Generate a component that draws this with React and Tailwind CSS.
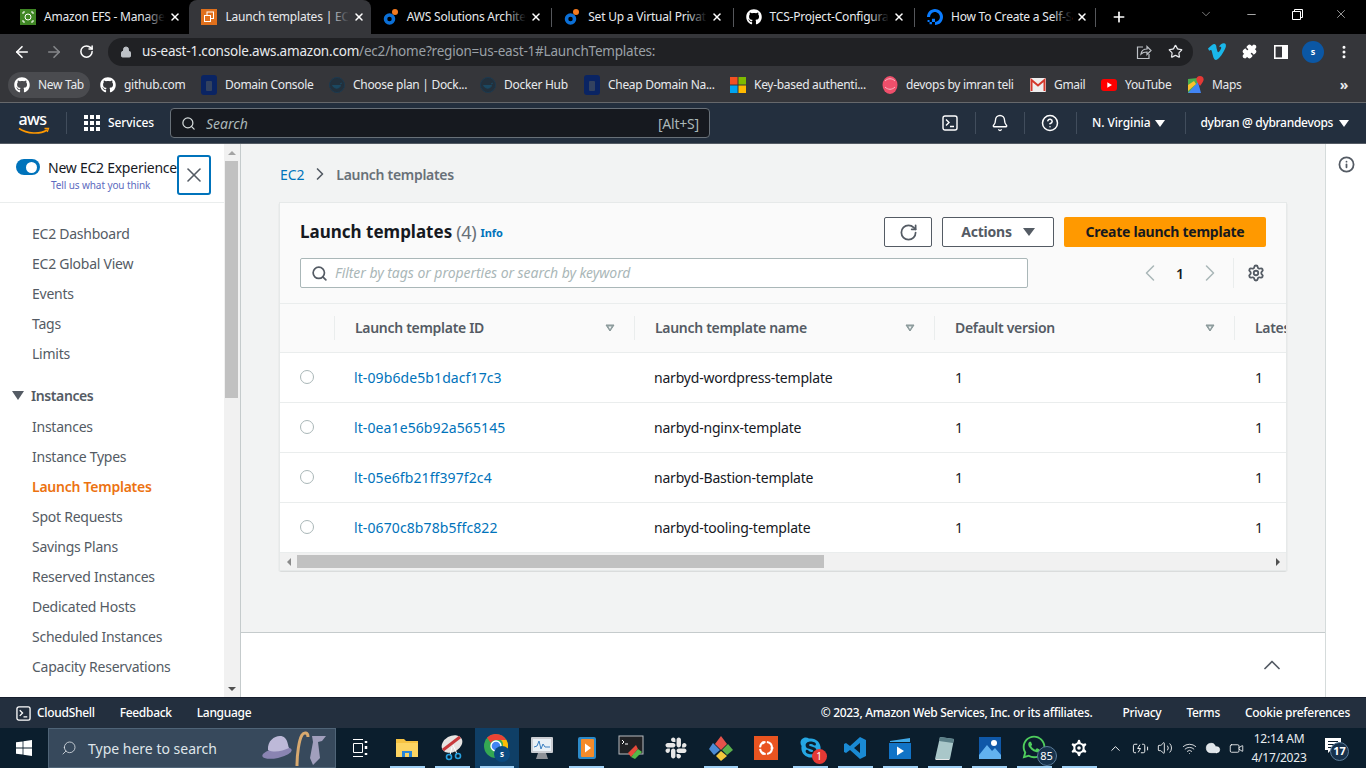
import React from "react";
import {
  ArrowLeft, ArrowRight, RotateCw, Lock, Star, Puzzle, X, Plus, Search, Bell,
  CircleHelp, ChevronLeft, ChevronRight, ChevronUp, ChevronDown, Settings, Info, Minus, MoreVertical,
  Volume2, Wifi, Cloud, BatteryCharging, Video,
} from "lucide-react";
import { FaGithub, FaWhatsapp, FaSkype, FaSlack } from "react-icons/fa";
import { SiDigitalocean } from "react-icons/si";

const UI = "font-['Noto_Sans',sans-serif]";

/* ---------- favicons ---------- */
const EfsIcon = () => (
  <svg width="16" height="16" viewBox="0 0 16 16">
    <rect width="16" height="16" fill="#3f8624" />
    <circle cx="8" cy="8" r="3" fill="none" stroke="#fff" />
    <path d="M3 3h2M3 3v2M13 3h-2M13 3v2M3 13h2M3 13v-2M13 13h-2M13 13v-2" stroke="#fff" />
  </svg>
);
const Ec2Icon = () => (
  <svg width="16" height="16" viewBox="0 0 16 16">
    <rect width="16" height="16" fill="#e0701c" />
    <rect x="6" y="3" width="6.5" height="6.5" fill="none" stroke="#fff" />
    <rect x="3.5" y="6.5" width="6" height="6" fill="#e0701c" stroke="#fff" />
  </svg>
);
const BlueIcon = () => (
  <svg width="16" height="16" viewBox="0 0 16 16">
    <circle cx="6.5" cy="10" r="4" fill="none" stroke="#0b6fd6" strokeWidth="3.5" />
    <circle cx="12" cy="3" r="3" fill="#f47b20" />
  </svg>
);
const NavyIcon = () => (
  <svg width="16" height="20" viewBox="0 0 16 20">
    <rect width="16" height="20" rx="3" fill="#0a2463" />
    <rect x="5" y="6" width="6" height="10" rx="1" fill="#33425f" />
  </svg>
);
const DockerIcon = () => (
  <svg width="16" height="16" viewBox="0 0 16 16">
    <circle cx="8" cy="8" r="7.5" fill="#22303c" stroke="#1c3a50" />
    <path d="M3.5 8.5h8c-.5 3-6 4-8 0zM11 7l2-1" fill="#1b4861" stroke="#1b4861" />
  </svg>
);
const MsIcon = () => (
  <svg width="16" height="16" viewBox="0 0 16 16">
    <rect width="7.5" height="7.5" fill="#f25022" />
    <rect x="8.5" width="7.5" height="7.5" fill="#7fba00" />
    <rect y="8.5" width="7.5" height="7.5" fill="#00a4ef" />
    <rect x="8.5" y="8.5" width="7.5" height="7.5" fill="#ffb900" />
  </svg>
);
const RubyIcon = () => (
  <svg width="16" height="20" viewBox="0 0 16 20">
    <ellipse cx="8" cy="10" rx="7.5" ry="9" fill="#ef4f6b" />
    <path d="M3 6c3-3 7-3 10 0M3 12c3 3 7 3 10 0" fill="none" stroke="#f9b6c2" />
  </svg>
);
const GmailIcon = () => (
  <svg width="16" height="14" viewBox="0 0 16 14">
    <rect width="16" height="14" rx="1" fill="#eee" />
    <path d="M1.5 13V2L8 7.5 14.5 2v11" fill="none" stroke="#d4382c" strokeWidth="2" />
  </svg>
);
const YtIcon = () => (
  <svg width="16" height="12" viewBox="0 0 16 12">
    <rect width="16" height="12" rx="3" fill="#f00" />
    <path d="M6.3 3.3v5.4L11 6z" fill="#fff" />
  </svg>
);
const MapsIcon = () => (
  <svg width="16" height="18" viewBox="0 0 16 18">
    <path d="M0 3l10-1v15H0z" fill="#4bae4f" />
    <path d="M0 17L10 6l3 11z" fill="#4285f4" />
    <path d="M0 9l6-4 2 3-8 7z" fill="#fbc02d" />
    <path d="M12 0a3.6 3.6 0 013.6 3.6C15.6 6 12 10 12 10S8.400 6 8.400 3.600A3.600 3.600 0 0112 0z" fill="#e53935" />
  </svg>
);
const VimeoIcon = () => (
  <svg width="20" height="18" viewBox="0 0 20 18">
    <path d="M1 5.500C4 3 6 .8 7.500 1c2 .3 1.800 3 2.300 5 .4 1.800.8 3.300 1.400 3.300 1 0 3-3.500 3-4.500 0-1.200-1.200-1.200-2.300-.6C13 1 15.500 0 17.200.3c2 .4 2 2.500 1.400 4.200C17.300 8.200 12 17 9 17c-2.400 0-3.200-5-4-8-.5-2-.9-2.500-2.800-1.300z" fill="#1ab7ea" />
  </svg>
);
const SideIcon = () => (
  <svg width="14" height="14" viewBox="0 0 14 14">
    <rect x="0.800" y="0.800" width="12.400" height="12.400" fill="none" stroke="#fff" strokeWidth="1.600" />
    <rect x="8" y="1" width="5" height="12" fill="#fff" />
  </svg>
);
const ShareIcon = () => (
  <svg width="16" height="16" viewBox="0 0 16 16" fill="none" stroke="#bdc1c6" strokeWidth="1.200">
    <path d="M7 3H1.500v11.500H13V10" />
    <path d="M5 10c.5-3.500 3-5 6-5V2.500l4 4-4 4V8c-2.500 0-4.500.5-6 2z" />
  </svg>
);
const TermIcon = ({ size = 16 }) => (
  <svg width={size} height={size} viewBox="0 0 16 16" fill="none" stroke="#fff" strokeWidth="1.400">
    <rect x="1" y="1" width="14" height="14" rx="2" />
    <path d="M4 4.500L7 7.500L4 10.500M8 11.500h4" />
  </svg>
);

/* ---------- taskbar icons ---------- */
const WinLogo = () => (
  <svg width="16" height="16" viewBox="0 0 16 16" fill="#fff">
    <path d="M0 2.300l6.600-.9v6.200H0zM7.400 1.300L16 0v7.600H7.400zM0 8.400h6.600v6.200L0 13.700zM7.400 8.400H16V16l-8.600-1.300z" />
  </svg>
);
const HatCaneTie = () => (
  <svg width="68" height="36" viewBox="0 0 68 36">
    <ellipse cx="15" cy="23" rx="15" ry="5" fill="#8a84b2" transform="rotate(-12 15 23)" />
    <path d="M6 20C5 8 18 3 23 8c3 3 3 8 4 10-6 3-15 5-21 2z" fill="#bdb9d8" />
    <path d="M35 36C35 24 37 10 40 5c2-3 6-3 6 2" fill="none" stroke="#d8a96f" strokeWidth="3" />
    <path d="M50 6l14 0-4 5-4 1 2 16-7 7-3-7 3-16z" fill="#a19fbd" />
  </svg>
);
const Folder = () => (
  <svg width="22" height="22" viewBox="0 0 22 22">
    <path d="M0 2h8l2 2h12v16H0z" fill="#f5c242" />
    <rect y="6" width="22" height="14" fill="#fcd462" />
    <rect x="6" y="14" width="10" height="6" fill="#2a86d8" />
    <rect x="9" y="16" width="4" height="4" fill="#fcd462" />
  </svg>
);
const Snip = () => (
  <svg width="24" height="26" viewBox="0 0 24 26">
    <ellipse cx="12" cy="9" rx="11" ry="8" fill="#e7e4e2" transform="rotate(-30 12 9)" />
    <path d="M3 15L20 2" stroke="#c8393b" strokeWidth="3" />
    <path d="M13 10l4 9M12 12l-2 8" stroke="#fff" />
    <circle cx="9" cy="22" r="2.500" fill="none" stroke="#27a1e0" strokeWidth="1.600" />
    <circle cx="18" cy="21" r="2.500" fill="none" stroke="#27a1e0" strokeWidth="1.600" />
  </svg>
);
const Chrome = () => (
  <div className="relative w-[26px] h-[28px]">
    <svg width="24" height="24" viewBox="0 0 24 24">
      <circle cx="12" cy="12" r="12" fill="#34a853" />
      <path d="M12 0a12 12 0 0110.400 6H12a6 6 0 00-5.200 3L3 3.500A12 12 0 0112 0z" fill="#ea4335" />
      <path d="M22.400 6A12 12 0 0112 24l5-9a6 6 0 000-9z" fill="#fbbc05" />
      <circle cx="12" cy="12" r="5" fill="#4285f4" stroke="#fff" strokeWidth="1.400" />
    </svg>
    <div className={`absolute right-0 bottom-0 w-4 h-4 rounded-full bg-[#0a4a80] text-white text-[8px] font-bold flex items-center justify-center ${UI}`}>s</div>
  </div>
);
const Monitor = () => (
  <svg width="24" height="26" viewBox="0 0 24 26">
    <rect x="1" y="2" width="22" height="16" rx="1" fill="#c9ccd1" />
    <rect x="3" y="4" width="18" height="12" fill="#e9f0f6" />
    <path d="M4 12l3-1 2-5 2 8 2-5 2 3h5" fill="none" stroke="#3a7fc1" />
    <path d="M8 18h8l2 6H6z" fill="#8e9298" />
  </svg>
);
const MediaPlay = () => (
  <svg width="20" height="24" viewBox="0 0 20 24">
    <rect x="1" y="1" width="18" height="22" rx="2" fill="#2c8ac9" />
    <rect x="4" y="3" width="13" height="18" rx="1" fill="#f58b2a" />
    <path d="M8 7.500v9l6-4.500z" fill="#fff" />
  </svg>
);
const TermGit = () => (
  <svg width="26" height="26" viewBox="0 0 26 26">
    <rect x="1" y="1" width="24" height="18" fill="#202124" stroke="#b9bcc0" />
    <path d="M4 5l2 2-2 2M7 9h3" stroke="#fff" fill="none" />
    <path d="M10 18l8-8 2 4-7 8z" fill="#e84a3a" />
    <path d="M13 22l7-8 4 3-7 7z" fill="#55b848" />
  </svg>
);
const Diamonds = () => (
  <svg width="26" height="26" viewBox="0 0 26 26">
    <path d="M13 1l6 8-6 6-6-6z" fill="#e5534b" />
    <path d="M5 8l7 7-6 5-5-6z" fill="#4b8bd6" />
    <path d="M20 9l5 6-6 5-5-5z" fill="#5bb04c" />
    <path d="M13 16l6 5-6 5-5-5z" fill="#f3c73c" />
  </svg>
);
const Ubuntu = () => (
  <div className="w-6 h-6 bg-[#e95420] flex items-center justify-center">
    <svg width="18" height="18" viewBox="0 0 18 18" fill="none" stroke="#fff" strokeWidth="2">
      <circle cx="9" cy="9" r="6" strokeDasharray="8 1.500" />
      <circle cx="15" cy="9" r="1.500" fill="#fff" stroke="none" />
      <circle cx="6" cy="3.800" r="1.500" fill="#fff" stroke="none" />
      <circle cx="6" cy="14.200" r="1.500" fill="#fff" stroke="none" />
    </svg>
  </div>
);
const VsCode = () => (
  <svg width="24" height="24" viewBox="0 0 24 24">
    <path d="M17 1l6 3v16l-6 3L7 14l-4 3-2-1V8l2-1 4 3zM17 7l-6 5 6 5z" fill="#1a8ad4" fillRule="evenodd" />
  </svg>
);
const Clapper = () => (
  <svg width="24" height="24" viewBox="0 0 24 24">
    <path d="M2 5l20-3v4H2z" fill="#40a9e8" />
    <rect x="1" y="7" width="22" height="16" fill="#1173c6" />
    <path d="M9 10.500v9l7-4.500z" fill="#fff" />
  </svg>
);
const Notepad = () => (
  <svg width="22" height="26" viewBox="0 0 22 26">
    <path d="M6 2l14 2-4 20H1z" fill="#a9c7c9" />
    <path d="M6 2l14 2-1 4L5 6z" fill="#5b7f87" />
    <path d="M1 24h15l-1 1H2z" fill="#e5e8e8" />
  </svg>
);
const Photos = () => (
  <svg width="22" height="22" viewBox="0 0 22 22">
    <rect width="22" height="22" fill="#0f58a8" />
    <circle cx="15" cy="6" r="3" fill="#fff" />
    <path d="M0 18l8-10 5 6 3-3 6 7v4H0z" fill="#62b2ef" />
  </svg>
);
const Whatsapp = () => (
  <div className="relative w-7 h-7">
    <FaWhatsapp size={26} className="text-[#4fce5d]" />
    <div className={`absolute -right-2 -bottom-1 w-[20px] h-[20px] rounded-full bg-[#17324c] border border-[#5b7c99] text-white text-[11px] flex items-center justify-center ${UI}`}>85</div>
  </div>
);
const Skype = () => (
  <div className="relative w-6 h-6">
    <FaSkype size={24} className="text-[#25a7e3]" />
    <div className={`absolute -right-1 -bottom-1 w-[15px] h-[15px] rounded-full bg-[#e53935] text-white text-[10px] flex items-center justify-center ${UI}`}>1</div>
  </div>
);

const tabs = [
  { icon: <EfsIcon />, title: "Amazon EFS - Manage" },
  { icon: <Ec2Icon />, title: "Launch templates | EC", active: true },
  { icon: <BlueIcon />, title: "AWS Solutions Archite" },
  { icon: <BlueIcon />, title: "Set Up a Virtual Privat" },
  { icon: <FaGithub size={16} className="text-white" />, title: "TCS-Project-Configura" },
  { icon: <SiDigitalocean size={16} className="text-[#0a7cff]" />, title: "How To Create a Self-S" },
];

const bookmarks = [
  { icon: <FaGithub size={16} className="text-white" />, label: "New Tab", w: "w-[86px]", pill: true },
  { icon: <FaGithub size={16} className="text-white" />, label: "github.com", w: "w-[101px]" },
  { icon: <NavyIcon />, label: "Domain Console", w: "w-[128px]" },
  { icon: <DockerIcon />, label: "Choose plan | Dock...", w: "w-[151px]" },
  { icon: <DockerIcon />, label: "Docker Hub", w: "w-[104px]" },
  { icon: <NavyIcon />, label: "Cheap Domain Na...", w: "w-[146px]" },
  { icon: <MsIcon />, label: "Key-based authenti...", w: "w-[152px]" },
  { icon: <RubyIcon />, label: "devops by imran teli", w: "w-[148px]" },
  { icon: <GmailIcon />, label: "Gmail", w: "w-[71px]" },
  { icon: <YtIcon />, label: "YouTube", w: "w-[87px]" },
  { icon: <MapsIcon />, label: "Maps", w: "w-[70px]" },
];

const navTop = ["EC2 Dashboard", "EC2 Global View", "Events", "Tags", "Limits"];
const navInstances = [
  "Instances", "Instance Types", "Launch Templates", "Spot Requests", "Savings Plans",
  "Reserved Instances", "Dedicated Hosts", "Scheduled Instances", "Capacity Reservations",
];

const rows = [
  ["lt-09b6de5b1dacf17c3", "narbyd-wordpress-template"],
  ["lt-0ea1e56b92a565145", "narbyd-nginx-template"],
  ["lt-05e6fb21ff397f2c4", "narbyd-Bastion-template"],
  ["lt-0670c8b78b5ffc822", "narbyd-tooling-template"],
];

const taskIcons = [
  { el: <Folder />, on: true },
  { el: <Snip />, on: true },
  { el: <Chrome />, on: true, active: true },
  { el: <Monitor /> },
  { el: <MediaPlay />, on: true },
  { el: <TermGit /> },
  { el: <FaSlack size={24} className="text-[#e8e8e8]" /> },
  { el: <Diamonds />, on: true },
  { el: <Ubuntu /> },
  { el: <Skype />, on: true },
  { el: <VsCode />, on: true },
  { el: <Clapper />, on: true },
  { el: <Notepad />, on: true },
  { el: <Photos />, on: true },
  { el: <Whatsapp />, on: true },
  { el: <Settings size={22} className="text-white" fill="#fff" stroke="#0b1e2d" />, on: true },
];

const TabStrip = () => (
  <div className="h-[34px] bg-black flex pl-2 shrink-0">
    {tabs.map((t, i) => (
      <div
        key={t.title}
        className={`relative w-[181.4px] h-[34px] flex items-center pl-3 pr-2 text-[12px] text-[#e8eaed] ${t.active ? "bg-[#35363a] rounded-t-lg" : ""}`}
      >
        <span className="w-4 h-4 shrink-0 flex items-center justify-center">{t.icon}</span>
        <span className="relative ml-2 flex-1 whitespace-nowrap tracking-[-0.2px]">
          {t.title}
          <span className={`absolute right-0 top-0 bottom-0 w-5 bg-gradient-to-r from-transparent ${t.active ? "to-[#35363a]" : "to-black"}`} />
        </span>
        <X size={12} strokeWidth={3} className="ml-1 mr-[3px] shrink-0 text-white" />
        {i > 1 && <span className="absolute right-0 top-2 h-[19px] w-px bg-[#55575b]" />}
      </div>
    ))}
    <div className="w-[42px] flex items-center justify-center pl-1">
      <Plus size={16} strokeWidth={2.5} className="text-white" />
    </div>
    <div className="flex-1 flex items-center justify-end text-white">
      <ChevronDown size={14} strokeWidth={1} className="mr-[15px] text-[#d0d0d0] -mt-[6px]" />
      <div className="w-[46px] flex justify-center -mt-[6px]"><Minus size={13} strokeWidth={1.2} /></div>
      <div className="w-[46px] flex justify-center -mt-[6px]">
        <svg width="11" height="11" viewBox="0 0 11 11" fill="none" stroke="#fff"><path d="M2.500 2.500v-2h8v8h-2M.5 2.500h8v8h-8z" /></svg>
      </div>
      <div className="w-[46px] flex justify-center -mt-[6px] pr-1"><X size={14} strokeWidth={1} /></div>
    </div>
  </div>
);

const Toolbar = () => (
  <div className="h-[35px] bg-[#35363a] flex items-center shrink-0 text-white">
    <div className="w-[43px] flex justify-center"><ArrowLeft size={18} strokeWidth={2.2} /></div>
    <div className="w-[21px] flex justify-center"><ArrowRight size={18} strokeWidth={2.2} className="text-[#85878a]" /></div>
    <div className="w-[44px] flex justify-center"><RotateCw size={15} strokeWidth={2.4} /></div>
    <div className="w-[1085px] h-[28px] rounded-full bg-[#202124] flex items-center pl-3 pr-[10px] text-[13.5px]">
      <Lock size={12} fill="#bdc1c6" className="text-[#bdc1c6] mr-[10px]" />
      <span className="text-[#e8eaed] tracking-[-0.2px]">us-east-1.console.aws.amazon.com</span>
      <span className="text-[#9aa0a6] tracking-[-0.2px]">/ec2/home?region=us-east-1#LaunchTemplates:</span>
      <span className="flex-1" />
      <ShareIcon />
      <Star size={15} className="text-[#e8eaed] ml-[16px]" />
    </div>
    <div className="flex items-center flex-1 pl-[14px]">
      <VimeoIcon />
      <Puzzle size={15} fill="#fff" className="ml-[15px] text-white" />
      <span className="ml-[17px]"><SideIcon /></span>
      <div className="ml-[14px] w-[22px] h-[22px] rounded-full bg-[#0b57a4] text-[9px] font-bold flex items-center justify-center">s</div>
      <MoreVertical size={16} strokeWidth={2.500} className="ml-[12px]" />
    </div>
  </div>
);

const Bookmarks = () => (
  <div className="h-[34px] bg-[#35363a] border-b border-[#66686b] flex items-center pl-2 pb-[2px] shrink-0 text-[12px] text-[#e8eaed] tracking-[-0.3px]">
    {bookmarks.map((b) => (
      <div key={b.label} className={`${b.w} h-[26px] flex items-center pl-[6px] shrink-0 whitespace-nowrap`}>
        <span className={`flex items-center pr-[6px] h-[26px] rounded-full ${b.pill ? "bg-[#4a4b4f] -ml-[6px] pl-[6px]" : ""}`}>
          <span className="w-4 flex justify-center shrink-0">{b.icon}</span>
          <span className="ml-2">{b.label}</span>
        </span>
      </div>
    ))}
    <span className="flex-1 text-right pr-[18px] text-[14px] font-bold">»</span>
  </div>
);

const AwsLogo = () => (
  <svg width="34" height="24" viewBox="0 0 34 24">
    <text x="0.500" y="12" fill="#fff" fontFamily="'Noto Sans',sans-serif" fontSize="16" fontWeight="500" letterSpacing="-0.600">aws</text>
    <path d="M1 15.500C9 21 22 21.500 29 17" fill="none" stroke="#ff9900" strokeWidth="1.600" />
    <path d="M26.500 15.500l4 0-1.300 3.500" fill="none" stroke="#ff9900" strokeWidth="1.300" />
  </svg>
);

const HeaderSep = ({ cls }) => <span className={`w-px h-[22px] shrink-0 bg-[#414d5c] ${cls}`} />;

const AwsHeader = () => (
  <div className="h-[41px] bg-[#232f3e] border-b border-[#545b64] flex items-center shrink-0 text-[12px] font-medium text-white">
    <div className="ml-[18px] w-[34px] flex mt-[3px]"><AwsLogo /></div>
    <HeaderSep cls="ml-[14px]" />
    <div className="ml-[17px] grid grid-cols-3 gap-[2px] w-4 shrink-0">
      {Array.from({ length: 9 }).map((_, i) => <span key={i} className="w-[4px] h-[4px] bg-white" />)}
    </div>
    <span className="ml-2 w-[62px] shrink-0 tracking-[-0.1px]">Services</span>
    <div className="w-[540px] shrink-0 h-[30px] bg-[#16191f] border border-[#687078] rounded-sm flex items-center pl-[10px] pr-[10px] text-[14px] font-normal text-[#aab7b8]">
      <Search size={15} strokeWidth={2} className="text-[#d5dbdb]" />
      <span className="ml-[10px] italic flex-1">Search</span>
      <span className="tracking-[-0.2px]">[Alt+S]</span>
    </div>
    <div className="ml-[232px] w-4 flex shrink-0"><TermIcon /></div>
    <HeaderSep cls="ml-[17px]" />
    <Bell size={18} strokeWidth={1.800} className="ml-[15px] shrink-0" />
    <HeaderSep cls="ml-[15px]" />
    <CircleHelp size={18} strokeWidth={2} className="ml-[16px] shrink-0" />
    <HeaderSep cls="ml-[17px]" />
    <span className="ml-[15px] whitespace-nowrap tracking-[-0.1px]">N. Virginia</span>
    <span className="ml-[5px] shrink-0 w-0 h-0 border-x-[5px] border-x-transparent border-t-[7px] border-t-white" />
    <HeaderSep cls="ml-[20px]" />
    <span className="ml-[14px] whitespace-nowrap tracking-[-0.3px]">dybran @ dybrandevops</span>
    <span className="ml-[6px] shrink-0 w-0 h-0 border-x-[5px] border-x-transparent border-t-[7px] border-t-white" />
  </div>
);

const NavItem = ({ label }) => (
  <div className={`h-[30px] pl-8 flex items-center text-[14px] tracking-[-0.25px] ${label === "Launch Templates" ? "text-[#ec7211] font-semibold" : "text-[#545b64]"}`}>
    {label}
  </div>
);

const Sidebar = () => (
  <div className="w-[224px] shrink-0 bg-white overflow-hidden">
    <div className="h-[59px] border-b border-[#eaeded] flex items-start pl-4 pt-[11px]">
      <div>
        <div className="flex items-center h-[24px]">
          <span className="w-6 h-4 rounded-full bg-[#0073bb] flex items-center justify-end pr-[3px]">
            <span className="w-[11px] h-[11px] rounded-full bg-white" />
          </span>
          <span className="ml-2 text-[14px] text-[#16191f] whitespace-nowrap w-[129px] tracking-[-0.25px]">New EC2 Experience</span>
        </div>
        <div className="ml-[35px] text-[10px] leading-[12px] text-[#5c6bc0] whitespace-nowrap tracking-[-0.1px]">Tell us what you think</div>
      </div>
      <div className="ml-auto mr-[13px] w-[34px] h-[40px] border-2 border-[#0073bb] rounded-[3px] flex items-center justify-center text-[#545b64]">
        <X size={24} strokeWidth={1.600} />
      </div>
    </div>
    <div className="pt-[15px]">
      {navTop.map((l) => <NavItem key={l} label={l} />)}
      <div className="mt-3 h-[30px] flex items-center pl-3 text-[14px] font-semibold tracking-[-0.4px] text-[#545b64]">
        <span className="w-0 h-0 border-x-[6px] border-x-transparent border-t-[9px] border-t-[#545b64]" />
        <span className="ml-[7px]">Instances</span>
      </div>
      <div className="mt-px">
        {navInstances.map((l) => <NavItem key={l} label={l} />)}
      </div>
    </div>
  </div>
);

const SideScroll = () => (
  <div className="w-[17px] shrink-0 bg-[#f1f1f1] border-r border-[#c5cbcc] flex flex-col items-start pl-px">
    <div className="w-[13px] h-[17px] flex items-center justify-center">
      <span className="w-0 h-0 border-x-[4px] border-x-transparent border-b-[4px] border-b-[#a3a3a3]" />
    </div>
    <div className="w-[13px] h-[237px] bg-[#c1c1c1]" />
    <div className="flex-1" />
    <div className="w-[13px] h-[17px] flex items-center justify-center">
      <span className="w-0 h-0 border-x-[4px] border-x-transparent border-t-[4px] border-t-[#505050]" />
    </div>
  </div>
);

const SortIcon = () => (
  <svg width="10" height="8" viewBox="0 0 10 8" className="shrink-0">
    <path d="M1 1h8L5 7z" fill="#95a5a6" stroke="#879596" />
    <path d="M3.500 2.500h3L5 5z" fill="#fafafa" />
  </svg>
);

const HeadCell = ({ label }) => (
  <div className="w-[300px] shrink-0 h-6 border-l border-[#eaeded] flex items-center justify-between pl-5 pr-[19px] text-[14px] font-semibold tracking-[-0.3px] text-[#545b64]">
    <span className="pb-[2px]">{label}</span>
    <SortIcon />
  </div>
);

const Card = () => (
  <div className="ml-[39px] w-[1006px] h-[367px] bg-white ring-1 ring-[#e6e9e9] shadow-[0_1px_1px_0_rgba(0,28,36,0.3),1px_1px_1px_0_rgba(0,28,36,0.15),-1px_1px_1px_0_rgba(0,28,36,0.15)] overflow-hidden">
    <div className="h-[101px] bg-[#fafafa] border-b border-[#eaeded] px-5 pt-[14px]">
      <div className="flex items-center h-[30px]">
        <h1 className="text-[17px] font-bold text-[#16191f] pb-[1px]">Launch templates</h1>
        <span className="ml-[4px] text-[18px] tracking-[-0.3px] text-[#687078]">(4)</span>
        <span className="ml-[4px] mt-[2px] text-[11px] font-bold text-[#0073bb]">Info</span>
        <span className="flex-1" />
        <div className="w-[48px] h-[30px] bg-white border border-[#545b64] rounded-[2px] flex items-center justify-center text-[#545b64]">
          <RotateCw size={19} strokeWidth={2.200} />
        </div>
        <div className="ml-[10px] w-[112px] h-[30px] bg-white border border-[#545b64] rounded-[2px] flex items-center justify-center text-[14px] font-bold tracking-[-0.2px] text-[#545b64]">
          <span className="pb-px">Actions</span>
          <span className="ml-[11px] w-0 h-0 border-x-[6px] border-x-transparent border-t-[8px] border-t-[#545b64]" />
        </div>
        <div className="ml-[10px] w-[202px] h-[30px] bg-[#ff9900] rounded-[2px] flex items-center justify-center text-[14px] font-bold tracking-[-0.25px] text-[#16191f]">
          <span className="pb-px">Create launch template</span>
        </div>
      </div>
      <div className="mt-[11px] flex items-center">
        <div className="w-[728px] shrink-0 h-[30px] bg-white border border-[#aab7b8] rounded-[2px] flex items-center pl-[10px]">
          <Search size={17} strokeWidth={2.400} className="text-[#545b64]" />
          <span className="ml-[7px] pb-[2px] text-[14px] italic tracking-[-0.05px] text-[#aab7b8]">Filter by tags or properties or search by keyword</span>
        </div>
        <ChevronLeft size={28} strokeWidth={1.300} className="ml-[108px] shrink-0 text-[#aab7b8]" />
        <span className="ml-[8px] w-[16px] text-center text-[14px] font-semibold text-[#16191f]">1</span>
        <ChevronRight size={28} strokeWidth={1.300} className="ml-[8px] shrink-0 text-[#aab7b8]" />
        <span className="ml-[9px] w-px h-[30px] shrink-0 bg-[#eaeded]" />
        <Settings size={18} strokeWidth={2.400} className="ml-[13px] shrink-0 text-[#545b64]" />
      </div>
    </div>
    <div className="h-[49px] bg-[#fafafa] border-b border-[#eaeded] flex items-center">
      <div className="w-[54px] shrink-0" />
      <HeadCell label="Launch template ID" />
      <HeadCell label="Launch template name" />
      <HeadCell label="Default version" />
      <HeadCell label="Latest version" />
    </div>
    {rows.map(([id, name]) => (
      <div key={id} className="h-[50px] border-b border-[#eaeded] flex items-center text-[14px] text-[#16191f]">
        <div className="w-[54px] shrink-0 pl-5 -mt-[2px]">
          <span className="block w-[14px] h-[14px] rounded-full border border-[#aab7b8] bg-white" />
        </div>
        <div className="w-[300px] shrink-0 pl-5 text-[#0073bb] tracking-[0.1px]">{id}</div>
        <div className="w-[300px] shrink-0 pl-5 tracking-[-0.2px]">{name}</div>
        <div className="w-[300px] shrink-0 pl-[21px]">1</div>
        <div className="w-[300px] shrink-0 pl-[21px]">1</div>
      </div>
    ))}
    <div className="h-[17px] bg-[#f1f1f1] flex items-center">
      <div className="w-[17px] flex justify-center">
        <span className="w-0 h-0 border-y-[4px] border-y-transparent border-r-[4px] border-r-[#8a8a8a]" />
      </div>
      <div className="w-[527px] h-[13px] bg-[#c1c1c1]" />
      <div className="flex-1" />
      <div className="w-[17px] flex justify-center">
        <span className="w-0 h-0 border-y-[4px] border-y-transparent border-l-[4px] border-l-[#505050]" />
      </div>
    </div>
  </div>
);

const Main = () => (
  <div className="flex-1 flex flex-col border-r border-[#d5dbdb] min-w-0">
    <div className="h-[489px] bg-[#f2f3f3] border-b border-[#c5cbcc]">
      <div className="ml-[39px] pt-[20px] h-[59px] flex items-start text-[14px]">
        <div className="h-5 flex items-center">
          <span className="text-[#0073bb] tracking-[-0.1px]">EC2</span>
          <ChevronRight size={20} strokeWidth={2} className="ml-[6px] text-[#545b64]" />
          <span className="ml-[6px] font-semibold tracking-[-0.3px] text-[#687078]">Launch templates</span>
        </div>
      </div>
      <Card />
    </div>
    <div className="flex-1 bg-white flex items-center justify-end pr-[39px]">
      <ChevronUp size={28} strokeWidth={1.500} className="text-[#545b64]" />
    </div>
  </div>
);

const Footer = () => (
  <div className="h-[31px] bg-[#232f3e] border-t border-[#161e2d] flex items-center shrink-0 text-[12px] font-medium tracking-[-0.3px] text-white whitespace-nowrap">
    <div className="ml-4"><TermIcon size={15} /></div>
    <span className="ml-[6px]">CloudShell</span>
    <span className="ml-[25px]">Feedback</span>
    <span className="ml-[25px]">Language</span>
    <span className="flex-1" />
    <span>© 2023, Amazon Web Services, Inc. or its affiliates.</span>
    <span className="ml-[30px]">Privacy</span>
    <span className="ml-[25px]">Terms</span>
    <span className="ml-[25px] mr-4">Cookie preferences</span>
  </div>
);

const Taskbar = () => (
  <div className="h-[40px] bg-[#0b1e2d] flex items-center shrink-0 text-white">
    <div className="w-[48px] flex justify-center"><WinLogo /></div>
    <div className="w-[288px] h-[40px] bg-[#37495c] border border-[#4f6477] flex items-center pl-3 pr-[5px] text-[14px] text-[#dfe5ea]">
      <Search size={16} strokeWidth={1.200} className="-scale-x-100" />
      <span className="ml-[11px] flex-1">Type here to search</span>
      <HatCaneTie />
    </div>
    <div className="w-[48px] flex justify-center">
      <svg width="16" height="18" viewBox="0 0 16 18" fill="none" stroke="#fff">
        <path d="M1 .5h10M1 17.500h10M1.500 4.500h9v9h-9z" />
        <path d="M14 2v2M14 7v3M14 14v2" strokeWidth="2.500" />
      </svg>
    </div>
    <div className="flex w-[717px] ml-[1px] mr-[6px] shrink-0">
      {taskIcons.map((t, i) => (
        <div key={i} className={`relative w-[44.8px] h-[40px] shrink-0 flex items-center justify-center ${t.active ? "bg-[#0f3f66]" : ""}`}>
          {t.el}
          {t.on && <span className="absolute bottom-0 left-[5px] right-[5px] h-[2px] bg-[#9fd0f5]" />}
        </div>
      ))}
    </div>
    <ChevronUp size={15} strokeWidth={1.500} className="shrink-0" />
    <BatteryCharging size={17} strokeWidth={1.300} className="ml-[9px] shrink-0" />
    <Volume2 size={16} strokeWidth={1.300} className="ml-[8px] shrink-0" />
    <Wifi size={15} strokeWidth={1.300} className="ml-[9px] shrink-0" />
    <Cloud size={16} fill="#dfe5ea" strokeWidth={1} className="ml-[8px] shrink-0" />
    <Video size={15} strokeWidth={1.300} className="ml-[8px] shrink-0" />
    <div className="ml-[2px] w-[66px] shrink-0 text-center text-[12px] leading-[19px] tracking-[-0.2px] text-[#e8edf0]">
      <div>12:14 AM</div>
      <div>4/17/2023</div>
    </div>
    <div className="relative ml-[12px] w-5 h-7 shrink-0">
      <svg width="16" height="16" viewBox="0 0 16 16" className="mt-[4px] ml-[1px]">
        <path d="M0 0h16v12H6l-3 3v-3H0z" fill="#fff" />
        <path d="M3 3.500h10M3 6.500h10M3 9.500h10" stroke="#0b1e2d" />
      </svg>
      <div className="absolute left-[6px] top-[8px] w-[19px] h-[19px] rounded-full bg-[#17324c] border border-[#5b7c99] text-[11px] font-bold flex items-center justify-center">17</div>
    </div>
  </div>
);

export default function App() {
  return (
    <div className={`w-[1366px] h-[768px] flex flex-col overflow-hidden ${UI}`}>
      <TabStrip />
      <Toolbar />
      <Bookmarks />
      <AwsHeader />
      <div className="h-[553px] flex shrink-0 overflow-hidden">
        <Sidebar />
        <SideScroll />
        <Main />
        <div className="w-[40px] shrink-0 bg-white flex justify-center pt-[12px]">
          <Info size={17} strokeWidth={2.500} className="text-[#545b64]" />
        </div>
      </div>
      <Footer />
      <Taskbar />
    </div>
  );
}
